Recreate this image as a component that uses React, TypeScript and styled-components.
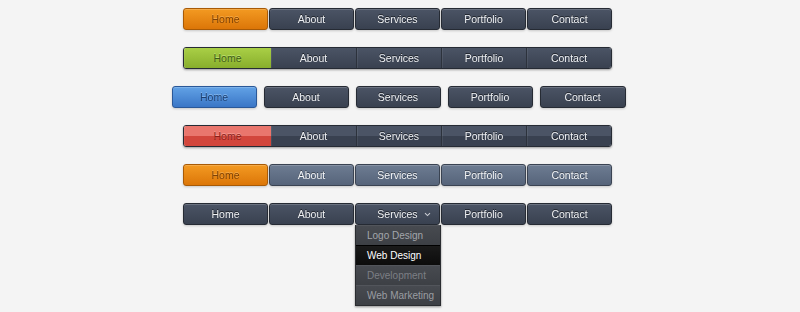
import React from "react";
import styled, { createGlobalStyle, css } from "styled-components";

const GlobalStyle = createGlobalStyle`
  html, body {
    margin: 0;
    padding: 0;
    background: #f4f4f4;
  }
  body {
    font-family: "Liberation Sans", Arial, sans-serif;
  }
`;

type Tone = "dark" | "slate" | "orange" | "green" | "blue" | "red";

const tones: Record<Tone, { top: string; bottom: string; border: string; text: string; shadow: string }> = {
  dark: { top: "#4b5465", bottom: "#394150", border: "#262b34", text: "#eef0f3", shadow: "rgba(0,0,0,0.6)" },
  slate: { top: "#6d7c92", bottom: "#56647a", border: "#3a4352", text: "#f2f4f7", shadow: "rgba(0,0,0,0.45)" },
  orange: { top: "#f39a22", bottom: "#dc7608", border: "#a85a06", text: "#804204", shadow: "rgba(255,200,120,0.5)" },
  green: { top: "#a9cf46", bottom: "#88ae2c", border: "#5f7e1c", text: "#3f5c18", shadow: "rgba(220,255,160,0.5)" },
  blue: { top: "#62a2e6", bottom: "#3a76c6", border: "#2a5898", text: "#1d3f70", shadow: "rgba(180,220,255,0.5)" },
  red: { top: "#e9766d", bottom: "#d2463c", border: "#9c2e27", text: "#8e1e18", shadow: "rgba(255,190,180,0.5)" },
};

const Page = styled.div`
  display: flex;
  flex-direction: column;
  align-items: center;
  gap: 17px;
  padding: 8px 5px 0 0;
  width: 800px;
  height: 312px;
  box-sizing: border-box;
`;

const Row = styled.div<{ $gap: number }>`
  position: relative;
  display: flex;
  gap: ${(p) => p.$gap}px;
  filter: drop-shadow(0 1px 1px rgba(0, 0, 0, 0.18));
`;

const JoinedBar = styled.div`
  display: flex;
  border: 1px solid #262b34;
  border-radius: 3px;
  overflow: hidden;
  box-shadow: 0 1px 2px rgba(0, 0, 0, 0.2);
`;

const Button = styled.div<{ $tone: Tone; $w: number; $joined?: boolean; $gloss?: boolean; $divider?: boolean }>`
  position: relative;
  display: flex;
  align-items: center;
  justify-content: center;
  width: ${(p) => p.$w}px;
  height: ${(p) => (p.$joined ? 20 : 22)}px;
  box-sizing: border-box;
  font-size: 10.5px;
  color: ${(p) => tones[p.$tone].text};
  text-shadow: 0 -1px 0 ${(p) => tones[p.$tone].shadow};
  background: linear-gradient(${(p) => tones[p.$tone].top}, ${(p) => tones[p.$tone].bottom});
  ${(p) =>
    p.$joined
      ? css`
          border-left: ${p.$divider ? "1px solid #2c323c" : "none"};
          box-shadow: inset 1px 0 0 rgba(255, 255, 255, 0.07);
        `
      : css`
          border: 1px solid ${tones[p.$tone].border};
          border-radius: 3px;
          box-shadow: inset 0 1px 0 rgba(255, 255, 255, 0.18);
        `}
  ${(p) =>
    p.$gloss &&
    css`
      background: linear-gradient(
        ${tones[p.$tone].top} 0%,
        ${tones[p.$tone].top} 50%,
        ${tones[p.$tone].bottom} 50%,
        ${tones[p.$tone].bottom} 100%
      );
    `}
`;

const Chevron = styled.svg`
  position: absolute;
  right: 8px;
  top: 8px;
  width: 7px;
  height: 5px;
`;

const Dropdown = styled.ul`
  position: absolute;
  top: 22px;
  left: 172px;
  width: 86px;
  margin: 0;
  padding: 0;
  list-style: none;
  background: #43464c;
  border: 1px solid #2a2c30;
  border-top: none;
  box-sizing: border-box;
  box-shadow: 0 1px 2px rgba(0, 0, 0, 0.25);
`;

const DropItem = styled.li<{ $active?: boolean; $color: string }>`
  height: 20px;
  line-height: 20px;
  padding-left: 11px;
  font-size: 10px;
  color: ${(p) => p.$color};
  background: ${(p) => (p.$active ? "linear-gradient(#1a1a1a, #0c0c0c)" : "linear-gradient(#474a50, #3d4045)")};
  border-top: 1px solid ${(p) => (p.$active ? "#000" : "#52555b")};
  box-sizing: border-box;
`;

const items = ["Home", "About", "Services", "Portfolio", "Contact"];

function SplitRow({ home, rest }: { home: Tone; rest: Tone }) {
  return (
    <Row $gap={1}>
      {items.map((label, i) => (
        <Button key={label} $tone={i === 0 ? home : rest} $w={85}>
          {label}
        </Button>
      ))}
    </Row>
  );
}

function JoinRow({ home, gloss }: { home: Tone; gloss?: boolean }) {
  return (
    <Row $gap={0}>
      <JoinedBar>
        {items.map((label, i) => (
          <Button
            key={label}
            $tone={i === 0 ? home : "dark"}
            $w={i === 0 ? 87 : 85}
            $joined
            $gloss={gloss}
            $divider={i > 1}
          >
            {label}
          </Button>
        ))}
      </JoinedBar>
    </Row>
  );
}

export default function App() {
  const menu = [
    { label: "Logo Design", color: "#a3a6ab" },
    { label: "Web Design", color: "#ffffff", active: true },
    { label: "Development", color: "#7c7f85" },
    { label: "Web Marketing", color: "#9a9da2" },
  ];

  return (
    <>
      <GlobalStyle />
      <Page>
        <SplitRow home="orange" rest="dark" />
        <JoinRow home="green" />
        <Row $gap={7} style={{ marginLeft: 2 }}>
          {items.map((label, i) => (
            <Button key={label} $tone={i === 0 ? "blue" : "dark"} $w={i === 4 ? 86 : 85}>
              {label}
            </Button>
          ))}
        </Row>
        <JoinRow home="red" gloss />
        <SplitRow home="orange" rest="slate" />
        <Row $gap={1}>
          {items.map((label) => (
            <Button key={label} $tone="dark" $w={85}>
              {label}
              {label === "Services" && (
                <Chevron viewBox="0 0 7 5">
                  <path d="M1 1.2 L3.5 3.6 L6 1.2" fill="none" stroke="#c9ccd2" strokeWidth="1.1" />
                </Chevron>
              )}
            </Button>
          ))}
          <Dropdown>
            {menu.map((m) => (
              <DropItem key={m.label} $color={m.color} $active={m.active}>
                {m.label}
              </DropItem>
            ))}
          </Dropdown>
        </Row>
      </Page>
    </>
  );
}
